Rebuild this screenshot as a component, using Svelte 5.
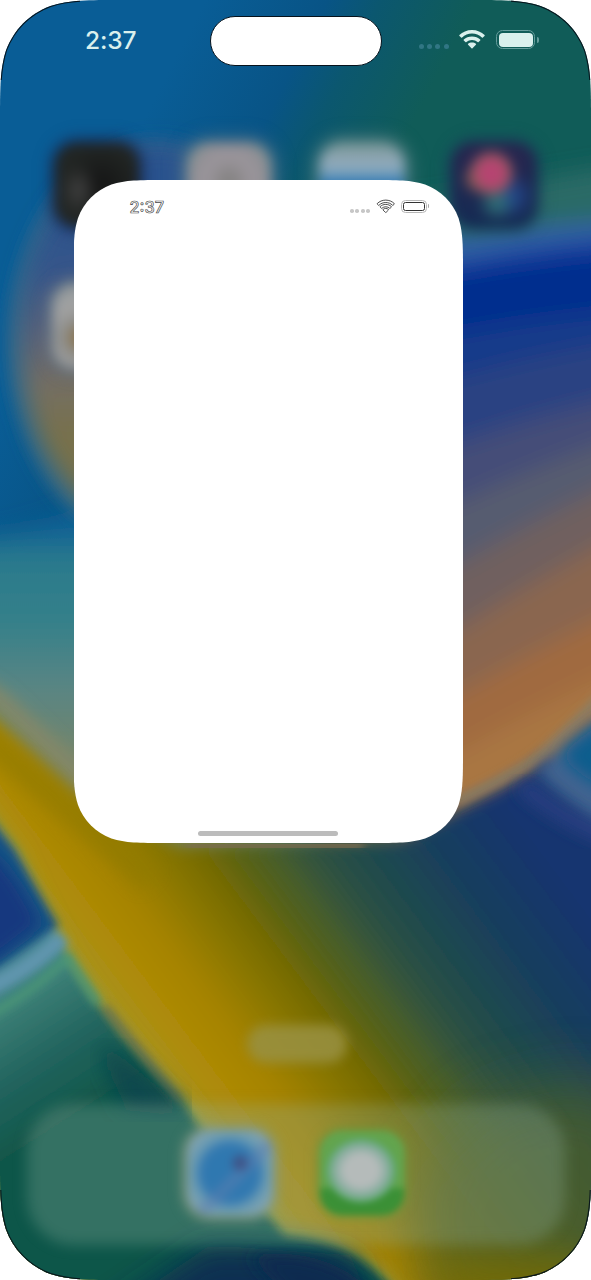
<script>
  // Continuous-curvature rounded rectangle
  function squircle(x, y, w, h, r) {
    const a = 1.5287 * r, b = 1.0885 * r, c = 0.8684 * r, d = 0.6315 * r;
    const e = 0.0749 * r, f = 0.3728 * r, g = 0.1691 * r;
    const R = x + w, B = y + h;
    return `M${x + a} ${y}H${R - a}C${R - b} ${y} ${R - c} ${y} ${R - d} ${y + e}C${R - f} ${y + g} ${R - g} ${y + f} ${R - e} ${y + d}C${R} ${y + c} ${R} ${y + b} ${R} ${y + a}` +
      `V${B - a}C${R} ${B - b} ${R} ${B - c} ${R - e} ${B - d}C${R - g} ${B - f} ${R - f} ${B - g} ${R - d} ${B - e}C${R - c} ${B} ${R - b} ${B} ${R - a} ${B}` +
      `H${x + a}C${x + b} ${B} ${x + c} ${B} ${x + d} ${B - e}C${x + f} ${B - g} ${x + g} ${B - f} ${x + e} ${B - d}C${x} ${B - c} ${x} ${B - b} ${x} ${B - a}` +
      `V${y + a}C${x} ${y + b} ${x} ${y + c} ${x + e} ${y + d}C${x + g} ${y + f} ${x + f} ${y + g} ${x + d} ${y + e}C${x + c} ${y} ${x + b} ${y} ${x + a} ${y}Z`;
  }
  const phoneShape = squircle(0, 0, 591, 1280, 80);
  const cardShape = squircle(0, 0, 389.5, 663, 60);

  // colour, y at x=463, y at x=591
  const bands = [
    ['#2b6a66', 195, 170], ['#3162a2', 236, 222], ['#1a42a0', 259, 240],
    ['#062e8e', 270, 253], ['#153a8a', 332, 314], ['#2a4282', 376, 347],
    ['#444e78', 442, 404], ['#575c70', 500, 446], ['#70605f', 562, 492],
    ['#8a6650', 627, 548], ['#a06b40', 692, 622], ['#a97643', 750, 682]
  ];
  const bandPath = (l, r) => `M320 ${l + (l - r) * 0.8}L463 ${l}Q530 ${(l + r) / 2 - 4} 630 ${r - (l - r) * 0.25}V900H320Z`;
</script>

{#snippet wifi(outline)}
  <svg class="wifi" class:outline viewBox="0 0 26 19">
    <path d="M13 0C18 0 22.500 2 25.600 5.100Q26 5.600 25.500 6.100L23.900 7.600Q23.400 8 22.900 7.500C20.200 4.900 16.800 3.600 13 3.600S5.800 4.900 3.100 7.500Q2.600 8 2.100 7.600L.5 6.100Q0 5.600.4 5.100C3.500 2 8 0 13 0Z" />
    <path d="M13 6.400C16.300 6.400 19.100 7.600 21.200 9.500Q21.700 10 21.200 10.500L19.600 12Q19.100 12.400 18.600 12C17 10.700 15.200 9.900 13 9.900S9 10.700 7.400 12Q6.900 12.400 6.400 12L4.800 10.500Q4.300 10 4.800 9.500C6.900 7.600 9.700 6.400 13 6.400Z" />
    <path d="M13 12.400C14.600 12.400 15.900 12.900 16.900 13.800Q17.400 14.300 16.900 14.800L13.500 18.200Q13 18.700 12.500 18.200L9.100 14.800Q8.600 14.300 9.100 13.800C10.100 12.900 11.400 12.400 13 12.400Z" />
  </svg>
{/snippet}

<main class="phone" style:clip-path={`path("${phoneShape}")`}>
  <svg class="wallpaper" viewBox="0 0 591 1280" aria-hidden="true">
    <defs>
      <filter id="b3" x="-20%" y="-20%" width="140%" height="140%"><feGaussianBlur stdDeviation="5" /></filter>
      <filter id="b8" x="-20%" y="-20%" width="140%" height="140%"><feGaussianBlur stdDeviation="8" /></filter>
      <filter id="b12" x="-20%" y="-20%" width="140%" height="140%"><feGaussianBlur stdDeviation="11" /></filter>
      <filter id="b16" x="-40%" y="-40%" width="180%" height="180%"><feGaussianBlur stdDeviation="16" /></filter>
      <filter id="b30" x="-60%" y="-60%" width="220%" height="220%"><feGaussianBlur stdDeviation="30" /></filter>
      <linearGradient id="sky" gradientUnits="userSpaceOnUse" x1="205" y1="0" x2="420" y2="110">
        <stop offset="0" stop-color="#095d96" /><stop offset=".45" stop-color="#085486" /><stop offset=".65" stop-color="#0b576f" /><stop offset="1" stop-color="#105c58" />
      </linearGradient>
      <linearGradient id="haze" gradientUnits="userSpaceOnUse" x1="0" y1="525" x2="0" y2="760">
        <stop offset="0" stop-color="#0c5f96" /><stop offset=".15" stop-color="#2b7a8c" /><stop offset=".4" stop-color="#33808a" /><stop offset=".68" stop-color="#588584" /><stop offset="1" stop-color="#74856a" />
      </linearGradient>
      <linearGradient id="lens" gradientUnits="userSpaceOnUse" x1="0" y1="190" x2="20" y2="520">
        <stop offset="0" stop-color="#2a528e" /><stop offset=".25" stop-color="#35558a" /><stop offset=".43" stop-color="#56607a" /><stop offset=".6" stop-color="#746e62" /><stop offset=".75" stop-color="#78714c" /><stop offset="1" stop-color="#74704c" />
      </linearGradient>
      <linearGradient id="sweep" gradientUnits="userSpaceOnUse" x1="-416" y1="312" x2="-64" y2="48">
        <stop offset="0" stop-color="#a59423" /><stop offset=".09" stop-color="#ae8b08" /><stop offset=".2" stop-color="#a58300" /><stop offset=".3" stop-color="#8a7700" /><stop offset=".385" stop-color="#746a04" /><stop offset=".45" stop-color="#596314" /><stop offset=".52" stop-color="#465d2c" /><stop offset=".59" stop-color="#305240" /><stop offset=".68" stop-color="#204b4c" /><stop offset=".81" stop-color="#193f5c" /><stop offset="1" stop-color="#13346f" />
      </linearGradient>
      <linearGradient id="ground" gradientUnits="userSpaceOnUse" x1="0" y1="970" x2="90" y2="1110">
        <stop offset="0" stop-color="#448692" /><stop offset=".25" stop-color="#3a7d74" /><stop offset=".6" stop-color="#22645e" /><stop offset="1" stop-color="#105648" />
      </linearGradient>
      <clipPath id="corners"><path d="M0 0H80V80H0ZM511 0H591V80H511ZM0 1190H80V1280H0ZM511 1190H591V1280H511Z" /></clipPath>
    </defs>
    <rect width="591" height="1280" fill="url(#sky)" />
    <path d="M-40 540Q40 532 90 500H330V900H-40Z" fill="url(#haze)" filter="url(#b12)" />
    <ellipse cx="150" cy="343" rx="142" ry="200" fill="#2f688a" filter="url(#b8)" />
    <ellipse cx="158" cy="338" rx="138" ry="194" fill="url(#lens)" filter="url(#b12)" />
    <g filter="url(#b12)">
      {#each bands as [color, left, right]}
        <path d={bandPath(left, right)} fill={color} />
      {/each}
    </g>
    <path d="M-30 680L0 700L80 776L100 840" fill="none" stroke="#858868" stroke-width="18" filter="url(#b8)" />
    <path d="M-40 690L0 722L80 796L180 846L400 838Q435 823 463 806Q535 770 548 757L640 820V1320H-40Z" fill="url(#sweep)" filter="url(#b8)" />
    <path d="M490 1100L591 1075L660 1130V1320H430L410 1180Z" fill="#50602a" opacity=".75" filter="url(#b30)" />
    <path d="M440 1262L560 1256L660 1270V1330H440Z" fill="#786d04" opacity=".7" filter="url(#b16)" />
    <path d="M-30 725L75 816L150 880" fill="none" stroke="#8f7a06" stroke-width="26" opacity=".6" filter="url(#b8)" />
    <path d="M455 802Q515 775 540 755T620 676" fill="none" stroke="#8a8068" stroke-width="8" filter="url(#b3)" />
    <path d="M536 772Q565 737 640 690V850Q570 810 536 772Z" fill="#416490" filter="url(#b8)" />
    <path d="M562 756Q580 732 640 702V800Q585 786 562 756Z" fill="#085d8d" filter="url(#b8)" />
    <path d="M522 785Q562 820 610 838" fill="none" stroke="#2b4083" stroke-width="14" filter="url(#b8)" />
    <path d="M190 845H360V847H190Z" fill="#7c6c50" stroke="#7c6c50" stroke-width="7" filter="url(#b3)" />
    <path d="M-40 765Q0 825 20 850Q42 900 68 950Q100 1010 190 1105Q215 1140 285 1225Q375 1240 405 1300H-40Z" fill="#989a3c" filter="url(#b8)" />
    <g filter="url(#b3)">
      <path d="M-40 780Q0 830 15 850Q40 895 60 943Q95 1012 185 1107Q235 1178 285 1236Q365 1244 400 1300H-40Z" fill="url(#ground)" />
      <path d="M-40 780Q0 830 15 850Q42 900 59 926L-40 995Z" fill="#195284" />
    </g>
    <path d="M-40 835Q2 845 40 924L0 955L-40 978Z" fill="#14397f" filter="url(#b8)" />
    <path d="M-20 992Q30 970 63 937" fill="none" stroke="#6095ae" stroke-width="17" filter="url(#b3)" />
    <path d="M-20 1020Q30 995 68 957L98 1004" fill="none" stroke="#4c9876" stroke-width="8" filter="url(#b3)" />
    <path d="M105 1050L177 1110L130 1105Z" fill="#07464e" stroke="#07464e" stroke-width="12" filter="url(#b12)" />
    <path d="M105 1007L180 1101" stroke="#55615a" stroke-width="5" filter="url(#b3)" />
    <path d="M100 1320L210 1245L350 1255L370 1300V1340Z" fill="#092d51" filter="url(#b16)" />
    <path d="M250 1256Q330 1243 380 1300H290Z" fill="#092b50" filter="url(#b8)" />
  </svg>

  <header class="status">
    <span class="time">2:37</span>
    <span class="island"></span>
    <span class="indicators">
      <span class="dots"><i></i><i></i><i></i><i></i></span>
      {@render wifi(false)}
      <span class="battery"><i></i></span>
    </span>
  </header>

  <section class="apps">
    <div class="tile dark"></div>
    <div class="tile grey"></div>
    <div class="tile pale"></div>
    <div class="tile navy"></div>
    <div class="tile silver"></div>
  </section>

  <div class="search"></div>
  <footer class="dock">
    <div class="tile compass"></div>
    <div class="tile message"></div>
  </footer>

  <section class="card" style:clip-path={`path("${cardShape}")`}>
    <header class="mini">
      <span class="mini-time">2:37</span>
      <span class="mini-indicators">
        <span class="dots"><i></i><i></i><i></i><i></i></span>
        {@render wifi(true)}
        <span class="battery"><i></i></span>
      </span>
    </header>
    <div class="handle"></div>
  </section>

  <svg class="edge" viewBox="0 0 591 1280" aria-hidden="true">
    <path d={phoneShape} clip-path="url(#corners)" />
  </svg>
</main>

<style>
  :global(body) { background: #fff; overflow: hidden; }
  .phone { position: relative; box-sizing: border-box; width: 591px; height: 1280px; display: flex; flex-direction: column; overflow: hidden; font-family: Inter, "Liberation Sans", sans-serif; }
  .wallpaper, .edge { position: absolute; inset: 0; width: 591px; height: 1280px; }
  .edge path { fill: none; stroke: #08141c; stroke-width: 2; }
  .status { position: relative; height: 66px; display: grid; grid-template-columns: 209.500px 172px 1fr; flex: none; }
  .time { padding: 25px 0 0 85px; font-size: 24.5px; line-height: 31px; font-weight: 500; letter-spacing: -.1px; color: #daf0ed; }
  .island { box-sizing: border-box; margin-top: 15.500px; height: 50.500px; border: 1px solid #06121c; border-radius: 26px; background: #fff; }
  .indicators { display: flex; align-items: flex-start; padding: 30px 0 0 37.500px; }
  .dots { display: flex; gap: 3.2px; padding-top: 13.500px; }
  .dots i { width: 5px; height: 5px; border-radius: 50%; background: #317684; }
  .wifi { width: 26px; height: 19px; margin-left: 10.500px; fill: #daf0ed; overflow: visible; }
  .battery { position: relative; box-sizing: border-box; width: 39px; height: 19px; margin-left: 11px; padding: 1.5px; border: 1.3px solid #659d9c; border-radius: 6.5px; }
  .battery i { display: block; height: 100%; border-radius: 4px; background: #daf0ed; }
  .battery::after { content: ""; position: absolute; right: -4.500px; top: 5.500px; width: 2px; height: 6px; border-radius: 0 2px 2px 0; background: #659d9c; }

  .apps { position: relative; display: grid; grid-template-columns: repeat(4, 84px); column-gap: 48.300px; row-gap: 57px; padding: 77px 0 0 55px; height: 935px; box-sizing: border-box; align-content: start; flex: none; }
  .tile { width: 84px; height: 84px; border-radius: 22px; filter: blur(6px); }
  .dark { background: radial-gradient(ellipse 18px 26px at 28% 56%, #414141, transparent), radial-gradient(circle at 55% 50%, #151515 0, #222624 40px); box-shadow: 0 0 10px 5px #173365; }
  .grey { background: radial-gradient(ellipse at 50% 46%, #858383 5px, #9a959b 22px, #939095 36px, #708f8d 52px); box-shadow: 0 0 12px 6px #466d86; }
  .pale { background: linear-gradient(#779694, #91a8b8 22%, #88a9bd 32%, #2c76b2 49%, #2d74b3); box-shadow: 0 0 12px 6px #4f7c80; }
  .navy { background: radial-gradient(circle at 47% 36%, #b64471 12px, #9a5961 17px, transparent 25px), radial-gradient(circle at 30% 43%, #9b674d, transparent 17px), radial-gradient(circle at 53% 71%, #327879, transparent 20px), radial-gradient(circle at 70% 63%, #234b93, transparent 25px), linear-gradient(#28254e, #142b54); box-shadow: 0 0 9px 4px #173e5b; }
  .silver { margin-left: -2px; background: radial-gradient(circle at 28px 54px, #8c744c 6px, #8b8b87 16px, #a3a3a3 32px, #91989a 54px); box-shadow: 0 0 10px 5px #687884; }

  .search { position: relative; align-self: center; width: 100px; height: 38px; margin-top: 24px; margin-left: 2px; border-radius: 19px; background: #999142; opacity: .86; filter: blur(6px); flex: none; }
  .dock { position: relative; box-sizing: border-box; display: flex; justify-content: center; align-items: center; gap: 48px; width: 538px; height: 141px; margin: 41px auto 0; flex: none; }
  .dock::before { content: ""; position: absolute; inset: 0; border-radius: 47px; background: rgba(142, 176, 160, .3); filter: blur(7px); }
  .dock .tile { position: relative; top: -2px; filter: blur(3px); }
  .dock .compass { filter: blur(4px); background: radial-gradient(circle at 62% 38%, #3f5488 5px, transparent 10px), linear-gradient(135deg, transparent 48%, rgba(92, 126, 176, .6) 56%, transparent 66%), radial-gradient(circle, #2f78b0 24px, #397cb2 29px, #6699b2 36px, #8fa8b0 54px); box-shadow: 0 0 9px 5px #849a84; }
  .message { background: radial-gradient(ellipse 35px 32px at 49% 47%, #b5bbba 46%, #8caea2 74%, #5ba66a 100%, transparent 101%), linear-gradient(#62a44e 65%, #3b9036 71%); box-shadow: 0 0 8px 3px #71933a; }

  .card { position: absolute; left: 73.500px; top: 180px; width: 389.500px; height: 663px; background: #fff; display: flex; flex-direction: column; justify-content: space-between; align-items: center; }
  .mini { box-sizing: border-box; width: 100%; display: flex; justify-content: space-between; padding: 18px 36px 0 56px; }
  .mini-time { font-size: 16.300px; line-height: 18px; font-weight: 500; color: #fff; -webkit-text-stroke: .65px #444; }
  .mini-indicators { display: flex; align-items: flex-start; padding-top: 1.500px; }
  .mini .dots { gap: 1.900px; padding-top: 9.500px; }
  .mini .dots i { width: 3.600px; height: 3.600px; background: #c7c7c7; }
  .mini .wifi { width: 17.500px; height: 13px; margin-left: 6.500px; fill: #fff; stroke: #222; stroke-width: 1.200px; }
  .mini .battery { width: 26px; height: 13px; margin-left: 7px; padding: 1px; border: 1.200px solid #b7b7b7; border-radius: 4.500px; }
  .mini .battery i { box-sizing: border-box; border: 1px solid #333; border-radius: 2.500px; background: #fff; }
  .mini .battery::after { right: -3px; top: 3.500px; width: 1.500px; height: 4px; background: #aaa; }
  .handle { width: 140px; height: 5px; margin-bottom: 7px; border-radius: 3px; background: #bcbcbc; }
</style>
